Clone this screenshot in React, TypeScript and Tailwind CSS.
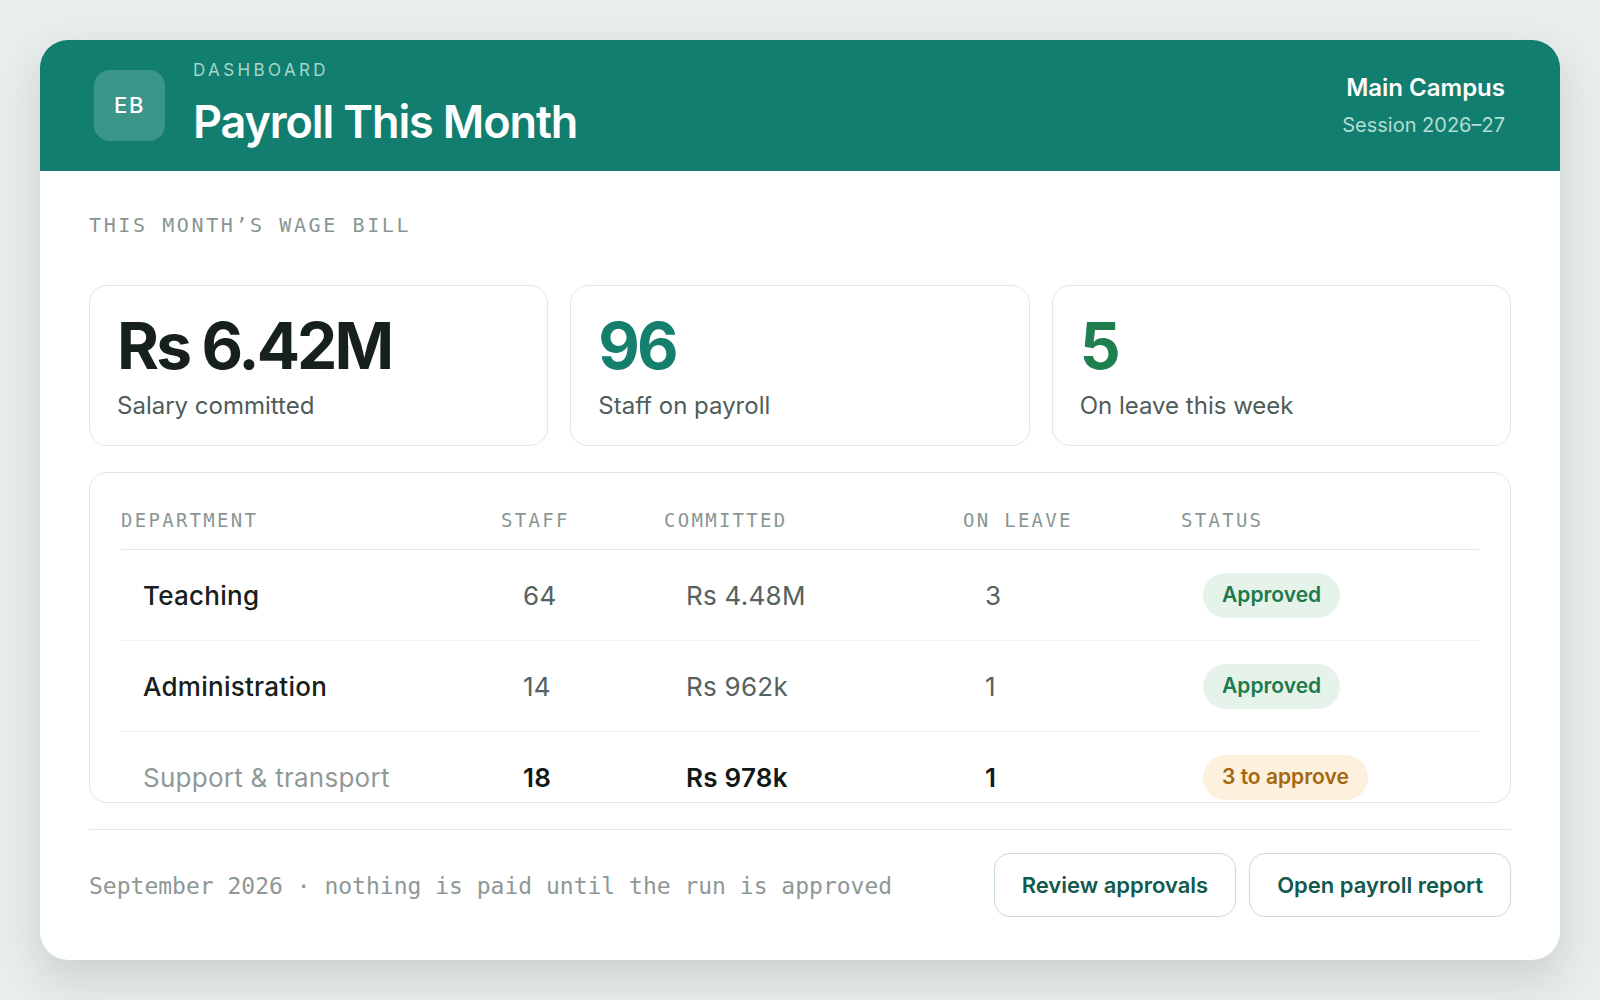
import React from "react";

const sans = "font-['Inter','Noto_Sans',sans-serif]";
const mono = "font-['DejaVu_Sans_Mono','Liberation_Mono',monospace]";

type Row = {
  dept: string;
  staff: string;
  committed: string;
  leave: string;
  status: string;
  pending?: boolean;
};

const rows: Row[] = [
  { dept: "Teaching", staff: "64", committed: "Rs 4.48M", leave: "3", status: "Approved" },
  { dept: "Administration", staff: "14", committed: "Rs 962k", leave: "1", status: "Approved" },
  { dept: "Support & transport", staff: "18", committed: "Rs 978k", leave: "1", status: "3 to approve", pending: true },
];

function Stat({ value, label, tone }: { value: string; label: string; tone: string }) {
  return (
    <div className="h-[161px] rounded-[18px] border border-[#e1e7e5] bg-white px-[27px] pt-[28px]">
      <div className={`text-[64px] font-bold leading-none tracking-[-0.045em] ${tone}`}>{value}</div>
      <div className="mt-[13px] text-[24px] leading-[30px] text-[#4f5d59]">{label}</div>
    </div>
  );
}

export default function App() {
  return (
    <div className={`min-h-screen bg-[#e9edec] p-[40px] ${sans}`}>
      <div className="flex h-[920px] w-[1520px] flex-col overflow-hidden rounded-[28px] bg-white shadow-[0_18px_40px_rgba(40,60,55,0.16)]">
        {/* header band */}
        <header className="flex h-[131px] shrink-0 items-center justify-between bg-[#127e6f] pl-[54px] pr-[55px]">
          <div className="flex items-center gap-[28px]">
            <div className="flex h-[71px] w-[71px] items-center justify-center rounded-[16px] bg-white/[0.18] text-[22px] font-medium tracking-[0.08em] text-white">
              EB
            </div>
            <div className="-mt-[6px] flex flex-col">
              <div className="text-[17px] leading-[22px] tracking-[0.2em] text-[#a5d6cb]">DASHBOARD</div>
              <h1 className="mt-[16px] text-[45px] font-semibold leading-[50px] tracking-[-0.025em] text-white">
                Payroll This Month
              </h1>
            </div>
          </div>
          <div className="flex flex-col items-end">
            <div className="text-[24px] font-semibold leading-[30px] text-white">Main Campus</div>
            <div className="mt-[9px] text-[20px] leading-[26px] text-[#b3ddd3]">Session 2026–27</div>
          </div>
        </header>

        {/* body */}
        <div className="flex flex-1 flex-col px-[49px] pt-[42px]">
          <div className={`${mono} text-[20px] leading-[24px] tracking-[0.13em] text-[#889592]`}>
            THIS MONTH’S WAGE BILL
          </div>

          <div className="mt-[48px] grid grid-cols-3 gap-[22px]">
            <Stat value="Rs 6.42M" label="Salary committed" tone="text-[#16211e]" />
            <Stat value="96" label="Staff on payroll" tone="text-[#157f6e]" />
            <Stat value="5" label="On leave this week" tone="text-[#1f7f4f]" />
          </div>

          {/* department table */}
          <div className="mt-[26px] h-[331px] overflow-hidden rounded-[18px] border border-[#e1e7e5] px-[31px] pt-[18px]">
            <div
              className={`grid h-[59px] grid-cols-[380px_163px_299px_218px_1fr] items-center border-b border-[#e3e9e7] ${mono} text-[19px] tracking-[0.12em] text-[#8a9693]`}
            >
              <div>DEPARTMENT</div>
              <div>STAFF</div>
              <div>COMMITTED</div>
              <div>ON LEAVE</div>
              <div>STATUS</div>
            </div>
            {rows.map((r) => (
              <div
                key={r.dept}
                className="grid h-[91px] shrink-0 grid-cols-[380px_163px_299px_218px_1fr] items-center border-b border-[#edf1f0] pl-[22px] text-[26px] tracking-[0.01em]"
              >
                <div className={r.pending ? "text-[#8f9a97]" : "font-medium text-[#16211e]"}>{r.dept}</div>
                <div className={r.pending ? "font-semibold text-[#111917]" : "text-[#55625e]"}>{r.staff}</div>
                <div className={r.pending ? "font-semibold text-[#111917]" : "text-[#55625e]"}>{r.committed}</div>
                <div className={r.pending ? "font-semibold text-[#111917]" : "text-[#55625e]"}>{r.leave}</div>
                <div>
                  <span
                    className={`inline-flex h-[45px] items-center rounded-full px-[19px] text-[21px] font-semibold tracking-normal ${
                      r.pending ? "bg-[#fdf0dc] text-[#a5680f]" : "bg-[#e5f3eb] text-[#1d7a4b]"
                    }`}
                  >
                    {r.status}
                  </span>
                </div>
              </div>
            ))}
          </div>

          {/* footer */}
          <div className="mt-[26px] flex items-center justify-between border-t border-[#e3e9e7] pt-[23px]">
            <div className={`${mono} mt-[2px] text-[23px] text-[#8d9895]`}>
              September 2026 · nothing is paid until the run is approved
            </div>
            <div className="flex gap-[13px]">
              <button className="h-[64px] rounded-[16px] border border-[#cadcd7] bg-white px-[27px] text-[22px] font-semibold text-[#12594e]">
                Review approvals
              </button>
              <button className="h-[64px] rounded-[16px] border border-[#cadcd7] bg-white px-[27px] text-[22px] font-semibold text-[#12594e]">
                Open payroll report
              </button>
            </div>
          </div>
        </div>
      </div>
    </div>
  );
}
